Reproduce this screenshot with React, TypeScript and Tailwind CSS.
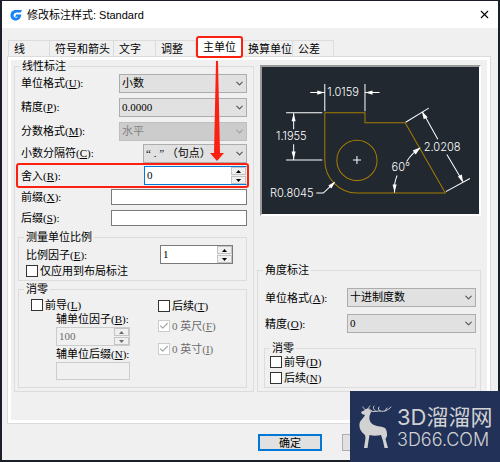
import type { ReactNode } from "react";
import { Check, ChevronDown, X } from "lucide-react";

type LabelProps = { id: string; text: string; hotkey: string; className?: string };

function FieldLabel({ id, text, hotkey, className = "" }: LabelProps) {
  return (
    <label htmlFor={id} className={`whitespace-nowrap ${className}`}>
      {text}(<u>{hotkey}</u>):
    </label>
  );
}

function Combo({
  id,
  value,
  className = "",
  disabled,
}: {
  id: string;
  value: string;
  className?: string;
  disabled?: boolean;
}) {
  return (
    <div className={`relative h-[19px] ${className}`}>
      <select
        id={id}
        disabled={disabled}
        className="block h-full w-full appearance-none border border-[#adadad] bg-[#e1e1e1] pl-[2px] leading-[15px] text-black disabled:border-[#bfbfbf] disabled:bg-[#cccccc] disabled:text-[#838383] disabled:opacity-100"
      >
        <option>{value}</option>
      </select>
      <ChevronDown
        className={`pointer-events-none absolute top-1 right-[2px] size-[11px] ${disabled ? "text-[#a0a0a0]" : "text-[#505050]"}`}
        strokeWidth={2.2}
      />
    </div>
  );
}

function Spinner({
  id,
  value,
  className = "",
  active,
  disabled,
}: {
  id: string;
  value: string;
  className?: string;
  active?: boolean;
  disabled?: boolean;
}) {
  const frame = active
    ? "border-[#0078d7] border-r-[#f0f0f0] bg-white"
    : disabled
      ? "border-[#cccccc] bg-[#f0f0f0]"
      : "border-[#7a7a7a] bg-white";
  const arrow = disabled ? "#6d6d6d" : "#000";
  return (
    <div className={`flex h-[19px] border ${frame} ${className}`}>
      <div className="flex min-w-0 flex-1 items-center pl-[2px]">
        <input
          id={id}
          defaultValue={value}
          disabled={disabled}
          size={1}
          autoFocus={active}
          className="w-full min-w-0 bg-transparent leading-[15px] outline-none disabled:text-[#6d6d6d]"
        />
      </div>
      <div className="flex w-[15px] shrink-0 flex-col gap-px bg-[#f0f0f0]">
        <button aria-label="增加" disabled={disabled} className="flex flex-1 items-center justify-center border border-[#c4c4c4] bg-[#f0f0f0]">
          <svg viewBox="0 0 5 3" className="h-[3px] w-[5px]">
            <path d="M0 3 2.5 0 5 3z" fill={arrow} />
          </svg>
        </button>
        <button aria-label="减少" disabled={disabled} className="flex flex-1 items-center justify-center border border-[#c4c4c4] bg-[#f0f0f0]">
          <svg viewBox="0 0 5 3" className="h-[3px] w-[5px]">
            <path d="M0 0h5L2.5 3z" fill={arrow} />
          </svg>
        </button>
      </div>
    </div>
  );
}

function Tick({
  text,
  hotkey,
  checked,
  disabled,
}: {
  text: string;
  hotkey?: string;
  checked?: boolean;
  disabled?: boolean;
}) {
  return (
    <label className={`flex h-3 items-center gap-[2px] whitespace-nowrap ${disabled ? "text-[#6d6d6d]" : ""}`}>
      <span className="relative size-3 shrink-0">
        <input
          type="checkbox"
          defaultChecked={checked}
          disabled={disabled}
          className="block size-3 appearance-none border border-[#333333] bg-white disabled:border-[#cccccc]"
        />
        {checked && <Check className="pointer-events-none absolute inset-px size-[10px] text-[#a8a8a8]" strokeWidth={3} />}
      </span>
      <span>
        {text}
        {hotkey && (
          <>
            (<u>{hotkey}</u>)
          </>
        )}
      </span>
    </label>
  );
}

function Group({ title, className = "", children }: { title: string; className?: string; children: ReactNode }) {
  return (
    <fieldset className={`min-w-0 border border-[#dcdcdc] ${className}`}>
      <legend className="ml-[5px] px-[2px]">{title}</legend>
      {children}
    </fieldset>
  );
}

function Preview() {
  return (
    <svg viewBox="0 0 216 146" className="block w-full bg-[#212830]" fill="none">
      <g stroke="#a67c00">
        <path d="M62.500 92V45.500H102.500V55.500H142.500L182.500 125.500H94.500A32 33 0 0 1 62.500 92" />
        <circle cx="94.500" cy="93" r="20" />
      </g>
      <g stroke="#fff">
        <path d="M62.500 17V44M102.500 17V44M48 25.500H62M103 25.500H117" />
        <path d="M24 45.500H60M24 92.500H60M31.500 46V62M31.500 77V92" />
        <path d="M143 55 166 41M183 124 207 111M160 45 175 72M184 87 200 114" />
        <path d="M157 81Q149 86 144 94M134.500 108Q131 116 132 125" />
        <path d="M54 125.500H61L72 115M90.500 92.500H98.500M94.500 88.500V96.500" />
      </g>
      <g fill="#fff">
        <path d="M62 25.500 55 23.500V27.500zM103 25.500 110 23.500V27.500zM31.500 46 29.500 54H33.500zM31.500 92 29.500 84H33.500z" />
        <path d="M159 44 161 52 165 50zM200 115 195 109 199 107zM158 80 150 83 153 87zM132 125 130 117H134zM73 114 66 118 69 121z" />
      </g>
      <g fill="#fff" fontFamily="Inter, 'Liberation Sans', sans-serif" fontSize="11" fontWeight="300">
        <text x="65" y="29">1.0159</text>
        <text x="14" y="73">1.1955</text>
        <text x="161" y="84">2.0208</text>
        <text x="129" y="104">60°</text>
        <text x="8" y="129">R0.8045</text>
      </g>
    </svg>
  );
}

function Watermark() {
  return (
    <div className="absolute -right-[2px] -bottom-[2px] flex h-[71px] w-[150px] items-center gap-[5px] bg-[#213157] pl-[9px] text-[#d2d2d2]">
      <svg viewBox="0 0 33 44" className="h-[44px] w-[33px] shrink-0" fill="currentColor">
        <path d="M2 7 6 5 9 3 12 7 10.500 11C10 15 11 18 15 20 19 22 23 21 26 23 28 25 28 28 28 31L26.500 34 29 43H25.500L24 36 22 30C18 31 14 31 10.500 30L9.500 36 8.500 43H5L6.500 33 6 30C2 27 0 23 .5 19 1 15 5 13 6 10L3 9z" />
        <g fill="none" stroke="currentColor" strokeLinecap="round">
          <path d="M10 5C13 8 17 6 21 6 26 7 29 5 32 2M13 6C9 4 9 2 11 1M17 6C14 5 14 2 15 1M21 6C19 5 19 3 20 2M7 5C5 4 4 3 4 2M26 6 28 3" />
        </g>
      </svg>
      <div className="flex flex-col font-['Inter','Noto_Sans_CJK_SC',sans-serif]">
        <span className="text-[22px] leading-[26px] whitespace-nowrap">3D溜溜网</span>
        <span className="text-[18px] leading-[20px] font-light whitespace-nowrap">3D66.COM</span>
      </div>
    </div>
  );
}

const tabs = [
  { name: "线", width: "w-[42px]" },
  { name: "符号和箭头", width: "w-[64px]" },
  { name: "文字", width: "w-[42px]" },
  { name: "调整", width: "w-[40px]" },
  { name: "主单位", width: "w-[47px]" },
  { name: "换算单位", width: "w-[50px]" },
  { name: "公差", width: "w-[41px]" },
];

export default function App() {
  return (
    <div className="relative min-h-screen border-x-2 border-t border-b-2 border-[#1b1f2a] bg-[#f0f0f0] font-['Liberation_Serif','Noto_Sans_CJK_SC',serif] text-[11px] leading-[12px] text-black">
      <header className="flex h-[27px] items-center gap-[5px] bg-white pr-[7px] pl-2">
        <svg viewBox="0 0 12 12" className="size-3">
          <path
            d="M12 1H6C2.500 1 .5 3.500.5 6.200S2.200 11.500 5.500 11.500C9 11.500 11 9 11.300 5.500H6.200L5 7.800H8C7 9.200 3.600 9 3.600 6.500 3.600 4.300 5 3.600 7 3.600H10.700z"
            fill="#1683f5"
          />
        </svg>
        <h1 className="flex-1 font-['Liberation_Sans','Noto_Sans_CJK_SC',sans-serif]">修改标注样式: Standard</h1>
        <button aria-label="关闭">
          <X className="size-[13px]" strokeWidth={2} />
        </button>
      </header>

      <div className="pt-[7px] pr-[7px] pl-[5px]">
        <div role="tablist" className="flex h-[21px] items-end pl-px">
          {tabs.map((tab) =>
            tab.name === "主单位" ? (
              <button
                key={tab.name}
                role="tab"
                aria-selected
                className={`${tab.width} relative z-10 -mb-[2px] h-[22px] shrink-0 rounded-[3px] border-2 border-[#fb2010] bg-white`}
              >
                {tab.name}
              </button>
            ) : (
              <button
                key={tab.name}
                role="tab"
                className={`${tab.width} h-[16px] shrink-0 border-t border-r border-[#dcdcdc] pl-[5px] text-left whitespace-nowrap first:border-l`}
              >
                {tab.name}
              </button>
            ),
          )}
        </div>

        <main className="border border-[#dcdcdc] bg-white p-[3px]">
          <div className="grid grid-cols-[240fr_224fr] items-stretch gap-[3px] bg-[#f0f0f0] pr-[6px] pb-[28px] pl-[3px]">
            <Group title="线性标注" className="pb-[3px]">
              <div className="flex flex-col px-[6px] pt-[2px]">
                <div className="flex h-6 items-start justify-between">
                  <FieldLabel id="unit" text="单位格式" hotkey="U" className="pt-[3px]" />
                  <Combo id="unit" value="小数" className="w-[128px]" />
                </div>
                <div className="flex h-6 items-start justify-between">
                  <FieldLabel id="precision" text="精度" hotkey="P" className="pt-[3px]" />
                  <Combo id="precision" value="0.0000" className="w-[128px]" />
                </div>
                <div className="flex h-[22px] items-start justify-between">
                  <FieldLabel id="fraction" text="分数格式" hotkey="M" className="pt-[3px]" />
                  <Combo id="fraction" value="水平" className="w-[128px]" disabled />
                </div>
                <div className="flex h-[19px] items-start justify-between">
                  <FieldLabel id="separator" text="小数分隔符" hotkey="C" className="pt-[3px]" />
                  <Combo id="separator" value="“ . ” （句点）" className="w-[104px]" />
                </div>
              </div>
              <div className="relative mr-1 ml-px flex h-[25px] items-center justify-between rounded-[3px] border-2 border-[#fb2010] pl-[3px]">
                <FieldLabel id="round" text="舍入" hotkey="R" />
                <Spinner id="round" value="0" active className="w-[103px]" />
                <svg viewBox="0 0 14 100" className="pointer-events-none absolute right-[23px] bottom-[25px] h-[100px] w-[14px]">
                  <path d="M6 0H8L10 92H14L7 100 0 92H4z" fill="#fb2010" />
                </svg>
              </div>
              <div className="flex flex-col gap-[5px] px-[6px] pt-px">
                <div className="flex h-4 items-center justify-between">
                  <FieldLabel id="prefix" text="前缀" hotkey="X" />
                  <input id="prefix" className="h-4 w-[136px] border border-[#7a7a7a] bg-white px-[2px]" />
                </div>
                <div className="flex h-4 items-center justify-between">
                  <FieldLabel id="suffix" text="后缀" hotkey="S" />
                  <input id="suffix" className="h-4 w-[136px] border border-[#7a7a7a] bg-white px-[2px]" />
                </div>
              </div>

              <div className="flex flex-col gap-[2px] pt-[5px] pr-[6px] pl-[3px]">
                <Group title="测量单位比例" className="pb-[3px]">
                  <div className="flex flex-col gap-px pr-[13px] pl-[7px]">
                    <div className="flex items-center justify-between pt-[2px]">
                      <FieldLabel id="factor" text="比例因子" hotkey="E" />
                      <Spinner id="factor" value="1" className="w-[73px]" />
                    </div>
                    <Tick text="仅应用到布局标注" />
                  </div>
                </Group>
                <Group title="消零" className="pb-[7px]">
                  <div className="flex justify-between pt-1 pr-[13px] pl-3">
                    <div className="flex flex-col">
                      <Tick text="前导" hotkey="L" />
                      <div className="flex flex-col pt-[2px] pl-[25px]">
                        <FieldLabel id="subfactor" text="辅单位因子" hotkey="B" />
                        <Spinner id="subfactor" value="100" disabled className="mt-[2px] w-[74px]" />
                        <FieldLabel id="subsuffix" text="辅单位后缀" hotkey="N" className="mt-[2px]" />
                        <input id="subsuffix" disabled className="mt-[2px] h-[18px] w-[74px] border border-[#cccccc] bg-[#f0f0f0]" />
                      </div>
                    </div>
                    <div className="flex w-[75px] flex-col pt-px">
                      <Tick text="后续" hotkey="T" />
                      <div className="flex flex-col gap-[11px] pt-2">
                        <Tick text="0 英尺" hotkey="F" checked disabled />
                        <Tick text="0 英寸" hotkey="I" checked disabled />
                      </div>
                    </div>
                  </div>
                </Group>
              </div>
            </Group>

            <div className="flex flex-col justify-between pt-[5px]">
              <div className="ml-[3px] border-2 border-t-[#9a9a9a] border-r-white border-b-white border-l-[#9a9a9a]">
                <Preview />
              </div>
              <Group title="角度标注" className="pb-[3px]">
                <div className="flex flex-col gap-[7px] pt-3 pr-1 pl-[7px]">
                  <div className="flex items-center justify-between">
                    <FieldLabel id="angleUnit" text="单位格式" hotkey="A" />
                    <Combo id="angleUnit" value="十进制度数" className="w-[129px]" />
                  </div>
                  <div className="flex items-center justify-between">
                    <FieldLabel id="anglePrecision" text="精度" hotkey="O" />
                    <Combo id="anglePrecision" value="0" className="w-[129px]" />
                  </div>
                </div>
                <div className="pt-[9px] pr-1 pl-[6px]">
                  <Group title="消零" className="pb-[3px]">
                    <div className="flex flex-col gap-1 pt-[2px] pl-[5px]">
                      <Tick text="前导" hotkey="D" />
                      <Tick text="后续" hotkey="N" />
                    </div>
                  </Group>
                </div>
              </Group>
            </div>
          </div>
        </main>

        <footer className="flex justify-end gap-[20px] pt-[10px] pr-[29px] pb-2">
          <button className="h-[17px] w-[64px] border-2 border-[#0078d7] bg-[#e1e1e1] leading-[12px]">确定</button>
          <button className="h-[17px] w-[120px] border border-[#adadad] bg-[#e1e1e1] leading-[12px]" aria-label="取消" />
        </footer>
      </div>

      <Watermark />
    </div>
  );
}
